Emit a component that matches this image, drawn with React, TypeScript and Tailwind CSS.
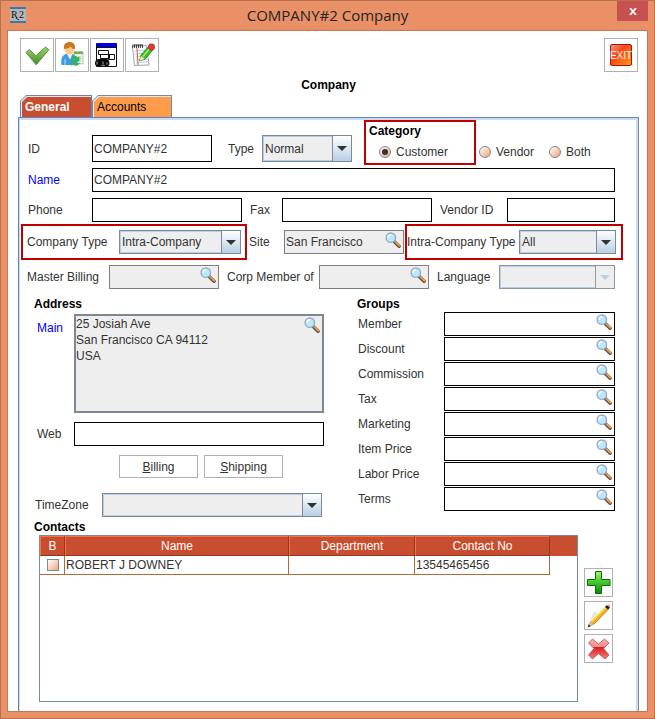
import { useState, type ReactNode } from "react";
import clsx from "clsx";

const GROUPS = ["Member", "Discount", "Commission", "Tax", "Marketing", "Item Price", "Labor Price", "Terms"];

const CATEGORIES = ["Customer", "Vendor", "Both"];

const CONTACTS = [{ name: "ROBERT J DOWNEY", department: "", phone: "13545465456" }];

function SearchIcon() {
  return (
    <svg viewBox="0 0 17 17" className="block size-4" aria-hidden="true">
      <path d="M10 10.400l5 4.800" stroke="#55504e" strokeWidth="3.600" strokeLinecap="round" />
      <path d="M11.400 10.900l4 3.600" stroke="#f09a3c" strokeWidth="2.200" strokeLinecap="round" />
      <path d="M9.200 9l1.800 1.800" stroke="#7c8ba0" strokeWidth="2" />
      <circle cx="6.200" cy="6" r="5" fill="#b9e8ff" stroke="#9aaac4" strokeWidth="1.500" />
      <path d="M3.200 6.200c0-2 1.400-3.200 3.200-3.300" stroke="#fff" strokeWidth="1.500" fill="none" />
    </svg>
  );
}

function TextField({ id, value = "", autoFocus, className }: { id: string; value?: string; autoFocus?: boolean; className?: string }) {
  return (
    <input
      id={id}
      defaultValue={value}
      autoFocus={autoFocus}
      className={clsx("min-w-0 border border-black bg-white pl-px text-[#333] outline-none", className)}
    />
  );
}

function LookupField({ id, label, value = "", locked, className }: { id: string; label: string; value?: string; locked?: boolean; className?: string }) {
  return (
    <div className={clsx("flex h-6 min-w-0 items-start border", locked ? "border-[#808080] bg-[#eee]" : "border-black bg-white", className)}>
      <input id={id} defaultValue={value} readOnly={locked} className="h-full min-w-0 flex-1 bg-transparent pl-px outline-none" />
      <button type="button" aria-label={`Find ${label}`} className="mt-px mr-0.5 shrink-0">
        <SearchIcon />
      </button>
    </div>
  );
}

function SelectField({ id, value = "", disabled, className }: { id: string; value?: string; disabled?: boolean; className?: string }) {
  return (
    <div className={clsx("relative border", disabled ? "border-[#8a98a5]" : "border-[#7a8a99]", className)}>
      <select
        id={id}
        disabled={disabled}
        defaultValue={value}
        className="block h-full w-full appearance-none border border-[#b8cfe5] bg-[#eee] pr-5 pl-px text-[#333] outline-none disabled:opacity-100"
      >
        <option>{value}</option>
      </select>
      <span
        className={clsx(
          "pointer-events-none absolute inset-y-0 right-0 flex w-[19px] items-center justify-center border-l",
          disabled ? "border-[#999] bg-[#eee]" : "border-[#7a8a99] bg-linear-to-b from-white to-[#b8cfe5]"
        )}
      >
        <svg viewBox="0 0 10 5" className="h-[5px] w-2.5">
          <path d="M0 0h10L5 5z" fill={disabled ? "#b8cfe5" : "#333"} />
        </svg>
      </span>
    </div>
  );
}

function ToolButton({ label, children }: { label: string; children: ReactNode }) {
  return (
    <button type="button" aria-label={label} className="size-[34px] border border-[#b0b0b0] bg-white">
      <svg viewBox="0 0 32 32" className="block size-8">{children}</svg>
    </button>
  );
}

function SideButton({ label, children }: { label: string; children: ReactNode }) {
  return (
    <button type="button" aria-label={label} className="size-[29px] border border-[#b0b0b0] bg-white">
      <svg viewBox="0 0 27 27" className="block size-[27px]">{children}</svg>
    </button>
  );
}

function Tab({ label, active }: { label: string; active?: boolean }) {
  return (
    <button
      type="button"
      role="tab"
      aria-selected={!!active}
      className={clsx(
        "h-[22px] px-px pt-px [clip-path:polygon(6px_0,100%_0,100%_100%,0_100%,0_6px)]",
        active ? "w-[72px] bg-[#6382bf]" : "w-20 bg-[#7a8a99]"
      )}
    >
      <span className="block h-full bg-[#dfeaf6] pt-px pl-px [clip-path:polygon(5px_0,100%_0,100%_100%,0_100%,0_5px)]">
        <span
          className={clsx(
            "flex h-full items-center pl-[3px] [clip-path:polygon(5px_0,100%_0,100%_100%,0_100%,0_5px)]",
            active ? "bg-[#c84e2f] font-bold text-white" : "bg-[#ff9c4c] text-black"
          )}
        >
          {label}
        </span>
      </span>
    </button>
  );
}

function Category({ name, checked, onPick }: { name: string; checked: boolean; onPick: () => void }) {
  return (
    <label className="flex h-[22px] items-center gap-[5px]">
      <input
        type="radio"
        name="category"
        checked={checked}
        onChange={onPick}
        className="grid size-3 appearance-none place-items-center rounded-full border border-[#7a8a99] bg-linear-to-br from-white to-[#f0a070] before:size-1.5 before:rounded-full checked:before:bg-[#333]"
      />
      {name}
    </label>
  );
}

function HeadCell({ children, className }: { children: ReactNode; className?: string }) {
  return (
    <th className={clsx("h-5 border border-t-[#ff7043] border-r-[#8c3720] border-b-[#8c3720] border-l-[#ff7043] p-0 font-normal", className)}>
      {children}
    </th>
  );
}

export default function App() {
  const [category, setCategory] = useState("Customer");

  return (
    <div className="flex min-h-screen flex-col border border-[#b8704f] bg-[#ea9066] px-1.5 pb-1.5 font-['Liberation_Sans',Arial,sans-serif] text-xs text-[#333]">
      <header className="grid h-[29px] grid-cols-[1fr_auto_1fr] items-start">
        <svg viewBox="0 0 16 16" className="mt-1.5 ml-[3px] size-4" aria-hidden="true">
          <path fill="#b3b5b8" d="M0 0h16v16H0z" />
          <path fill="#3c78a8" d="M0 0h16v2H0zM0 14h16v2H0z" />
          <text x="1" y="11" fontSize="10" fontFamily="Liberation Serif, serif" fill="#111">R</text>
          <text x="9" y="11" fontSize="10" fontFamily="Liberation Serif, serif" fill="#111">2</text>
          <path d="M6 11l3 2" stroke="#222" />
        </svg>
        <h1 className="pt-0.5 font-['Open_Sans',sans-serif] text-[15px] leading-6 text-[#222]">COMPANY#2 Company</h1>
        <button type="button" aria-label="Close" className="flex h-5 w-[31px] items-center justify-center justify-self-end bg-[#c75050]">
          <svg viewBox="0 0 8 7" className="h-[7px] w-2">
            <path d="M1 0l6 7M7 0L1 7" stroke="#fff" strokeWidth="1.800" />
          </svg>
        </button>
      </header>

      <main className="flex flex-1 flex-col border border-[#c27752] bg-white px-2.5 pt-[7px] pr-2">
        <div className="flex justify-between pr-px pl-0.5">
          <div className="flex gap-px">
            <ToolButton label="Save">
              <defs>
                <linearGradient id="tick" x1="0" y1="0" x2="0" y2="1">
                  <stop offset="0" stopColor="#a2d36c" />
                  <stop offset="1" stopColor="#3f8c28" />
                </linearGradient>
              </defs>
              <path d="M5 13.500l3.500-3 6.300 6.300L24.600 8l3.200 2.800L15.200 25.800z" fill="url(#tick)" stroke="#56913c" strokeWidth="1" strokeLinejoin="round" />
            </ToolButton>
            <ToolButton label="Update contact">
              <path d="M18 13h9v12l-9-1z" fill="#eef4e8" stroke="#b9c9b0" />
              <path d="M18 12.500h9v2.500h-9z" fill="#79ad52" />
              <path d="M20 17v6m2.500-6v6m2-6v6M18 19.500h9" stroke="#c8cfc4" strokeWidth=".7" />
              <path d="M5.500 26c-1-7 1-10.500 6-11.500h4c4 1.500 6 4 6.500 11.500z" fill="#3f9ae6" />
              <path d="M11 15l3 5.500 2.500-5.500z" fill="#fff" />
              <path d="M9 26v-6" stroke="#b9e0ff" />
              <ellipse cx="13.500" cy="10" rx="4.800" ry="5.500" fill="#f8c88c" />
              <path d="M8 10c-.8-5 2-7 5.500-7s6.500 2 5.200 7.500c-1.700-.3-3-1.500-4-3-1.200 1.800-4.500 2-6.700 2.500z" fill="#c9781c" />
              <path d="M14.500 20.500c1-3.500 5-4.500 7.500-2l1.500-1.500v5.500h-5.500l2-2c-1.500-1-3.500-1-5.500 0zM24 23.500c-1 3.500-5 4-7.500 2L15 27v-5h5l-1.800 2c1.500 1 3.500.8 5.800-.5z" fill="#35b548" />
            </ToolButton>
            <ToolButton label="Find window">
              <path d="M5.500 4.500h20v23h-20z" fill="#fff" stroke="#111" />
              <path d="M6 4h19.500v4.500H6z" fill="#0000e8" />
              <path d="M5 8.500h21" stroke="#111" />
              <path d="M7.500 11.500h10v4h-10zM9.500 15.500h9v4h-9zM17.500 15.500h6v5h-6z" fill="#fff" stroke="#111" />
              <path d="M4 24.500c0-3 1.500-4.500 4-4.500h7c2.500 0 3.500 2 3.500 4.500 0 2.700-3 3.200-5 2h-3c-1.500 2-6.500 1.500-6.500-2z" fill="#0a0a0a" />
              <path d="M6 22.500v3m6-3v3m4-2v2" stroke="#a8a8a8" />
            </ToolButton>
            <ToolButton label="Notes">
              <path d="M6.500 7.500l14-1 2.500 19.500-14.500.5z" fill="#fff" stroke="#9aa7ba" />
              <path d="M9 12l12-1M9 15l13-1M10 18l12-1M10 21l12-1M10 24l13-1.500" stroke="#9fc4ec" strokeWidth=".8" />
              <path d="M11 9l1 17" stroke="#ef5840" />
              <path d="M6.500 9V6.500l2-1V9m0-2.500l2-1V9m0-2.500l2-1V9m0-2.500l2-1V9m0-2.500l2-1V9" fill="none" stroke="#333" strokeWidth=".9" />
              <path d="M13.500 22l1.500-6 8-9 4.200 3.500-8.200 9.800z" fill="#41bd28" stroke="#27771c" strokeWidth=".8" />
              <path d="M17 17.500l7.500-9" stroke="#a8ed72" strokeWidth="1.400" />
              <path d="M13.500 22l1.500-5.300 3.800 3.300z" fill="#f7dca8" />
              <circle cx="25.500" cy="8" r="3.200" fill="#e33a31" stroke="#a72520" strokeWidth=".6" />
            </ToolButton>
          </div>
          <ToolButton label="Exit">
            <defs>
              <linearGradient id="exit" x1="0" y1="0" x2="1" y2="1">
                <stop offset="0" stopColor="#eaa08c" />
                <stop offset=".4" stopColor="#ff4510" />
                <stop offset="1" stopColor="#ff9c20" />
              </linearGradient>
            </defs>
            <rect x="5.500" y="5.500" width="21" height="21" rx="1.500" fill="url(#exit)" stroke="#a41510" />
            <text x="16" y="20" textAnchor="middle" fontSize="10" fontFamily="Liberation Sans, sans-serif" fill="#fff">EXIT</text>
          </ToolButton>
        </div>

        <h2 className="pt-1 text-center leading-[18px] font-bold text-black">Company</h2>

        <div role="tablist" className="flex pt-px pl-0.5">
          <Tab label="General" active />
          <Tab label="Accounts" />
        </div>

        <div className="flex flex-1 flex-col border-x border-t border-t-[#6382bf] border-r-[#7a8a99] border-l-[#6382bf]">
          <div className="flex flex-1 flex-col border-t-2 border-r-2 border-l border-[#c8ddf2] pr-[21px]">
            <div className="flex items-start pl-2">
              <div className="flex items-center pt-[15px]">
                <label htmlFor="company-id" className="w-16">ID</label>
                <TextField id="company-id" value="COMPANY#2" className="h-[27px] w-[120px]" />
                <label htmlFor="type" className="w-[50px] pl-4">Type</label>
                <SelectField id="type" value="Normal" className="h-[27px] w-[90px]" />
              </div>
              <div role="radiogroup" aria-label="Category" className="ml-3 flex items-end">
                <div className="h-[45px] w-28 border-2 border-[#c00000] pl-[3px]">
                  <h3 className="leading-[19px] font-bold text-black">Category</h3>
                  <div className="pl-2.5">
                    <Category name="Customer" checked={category === "Customer"} onPick={() => setCategory("Customer")} />
                  </div>
                </div>
                <div className="flex gap-[15px] pb-0.5 pl-[3px]">
                  {CATEGORIES.slice(1).map((name) => (
                    <Category key={name} name={name} checked={category === name} onPick={() => setCategory(name)} />
                  ))}
                </div>
              </div>
            </div>

            <div className="mt-[3px] flex items-center pl-2">
              <label htmlFor="name" className="w-16 text-[#0000ff]">Name</label>
              <TextField id="name" value="COMPANY#2" className="h-6 flex-1" />
            </div>

            <div className="mt-1.5 flex items-center pl-2">
              <label htmlFor="phone" className="w-16">Phone</label>
              <TextField id="phone" className="h-6 w-[150px]" />
              <label htmlFor="fax" className="w-10 pl-2">Fax</label>
              <TextField id="fax" autoFocus className="h-6 w-[150px]" />
              <label htmlFor="vendor-id" className="w-[75px] pl-2">Vendor ID</label>
              <TextField id="vendor-id" className="h-6 flex-1" />
            </div>

            <div className="mt-0.5 -mr-2 flex items-center pl-px">
              <div className="flex w-[226px] items-center border-2 border-[#c00000] py-1 pl-1">
                <label htmlFor="company-type" className="w-[92px]">Company Type</label>
                <SelectField id="company-type" value="Intra-Company" className="h-6 w-[122px]" />
              </div>
              <label htmlFor="site" className="w-[37px] pl-0.5">Site</label>
              <LookupField id="site" label="site" value="San Francisco" locked className="w-[120px]" />
              <div className="ml-px flex flex-1 items-center border-2 border-[#c00000] py-1 pr-[5px]">
                <label htmlFor="intra-type" className="w-28 whitespace-nowrap">Intra-Company Type</label>
                <SelectField id="intra-type" value="All" className="h-6 flex-1" />
              </div>
            </div>

            <div className="mt-[5px] flex items-center pl-[7px]">
              <label htmlFor="master" className="w-[82px]">Master Billing</label>
              <LookupField id="master" label="master billing" locked className="w-[110px]" />
              <label htmlFor="corp" className="w-[100px] pl-2 whitespace-nowrap">Corp Member of</label>
              <LookupField id="corp" label="corp member" locked className="w-[110px]" />
              <label htmlFor="language" className="w-[70px] pl-2">Language</label>
              <SelectField id="language" disabled className="h-6 flex-1" />
            </div>

            <div className="flex gap-[33px] pt-[7px] pl-3.5">
              <section className="flex-1">
                <h3 className="leading-4 font-bold text-black">Address</h3>
                <div className="mt-0.5 flex pl-[3px]">
                  <label htmlFor="address" className="w-[37px] pt-1.5 text-[#0000ff]">Main</label>
                  <div className="relative flex-1">
                    <textarea
                      id="address"
                      readOnly
                      defaultValue={"25 Josiah Ave\nSan Francisco CA 94112\nUSA"}
                      className="block h-[99px] w-full resize-none border-2 border-[#7f8890] bg-[#eee] leading-4 outline-none"
                    />
                    <button type="button" aria-label="Find address" className="absolute top-[3px] right-1">
                      <SearchIcon />
                    </button>
                  </div>
                </div>
                <div className="mt-[9px] flex items-center pl-[3px]">
                  <label htmlFor="web" className="w-[37px]">Web</label>
                  <TextField id="web" className="h-6 flex-1" />
                </div>
                <div className="mt-[9px] flex gap-1.5 pl-[85px]">
                  <button type="button" className="h-[23px] w-[79px] border border-[#b0b0b0] bg-white pt-px">
                    <u>B</u>illing
                  </button>
                  <button type="button" className="h-[23px] w-[79px] border border-[#b0b0b0] bg-white pt-px">
                    <u>S</u>hipping
                  </button>
                </div>
                <div className="mt-[15px] flex items-center pl-px">
                  <label htmlFor="timezone" className="w-[67px]">TimeZone</label>
                  <SelectField id="timezone" className="mr-0.5 h-6 flex-1" />
                </div>
              </section>

              <section className="w-[258px]">
                <h3 className="leading-4 font-bold text-black">Groups</h3>
                <div className="flex flex-col gap-px">
                  {GROUPS.map((group) => (
                    <div key={group} className="flex items-center pl-px">
                      <label htmlFor={group} className="w-[86px] shrink-0">{group}</label>
                      <LookupField id={group} label={group} className="flex-1" />
                    </div>
                  ))}
                </div>
              </section>
            </div>

            <h3 className="mt-0.5 pl-3.5 leading-4 font-bold text-black">Contacts</h3>
            <div className="flex flex-1 gap-1.5 pb-[9px] pl-[19px]">
              <div className="min-h-[167px] flex-1 border border-[#7a8a99]">
                <table className="w-full table-fixed border-separate border-spacing-0">
                  <thead>
                    <tr className="bg-[#c84e2f] text-white">
                      <HeadCell className="w-[25px]">B</HeadCell>
                      <HeadCell>Name</HeadCell>
                      <HeadCell className="w-[126px]">Department</HeadCell>
                      <HeadCell className="w-[135px]">Contact No</HeadCell>
                      <td className="w-[27px]" />
                    </tr>
                  </thead>
                  <tbody>
                    {CONTACTS.map((contact) => (
                      <tr key={contact.name} className="*:h-[19px] *:border-[#b5693a] *:p-0 *:pl-px">
                        <td className="border-r border-b">
                          <input
                            type="checkbox"
                            aria-label={`Select ${contact.name}`}
                            className="mx-auto block size-3 appearance-none border border-[#7a8a99] bg-linear-to-br from-white to-[#f0a878] checked:bg-[#333]"
                          />
                        </td>
                        <td className="border-r border-b">{contact.name}</td>
                        <td className="border-r border-b">{contact.department}</td>
                        <td className="border-r border-b">{contact.phone}</td>
                      </tr>
                    ))}
                  </tbody>
                </table>
              </div>
              <div className="flex flex-col gap-1 pt-[33px] pr-0.5">
                <SideButton label="Add contact">
                  <defs>
                    <linearGradient id="plus" x1="0" y1="0" x2="0" y2="1">
                      <stop offset="0" stopColor="#a9f06a" />
                      <stop offset=".5" stopColor="#43c52c" />
                      <stop offset="1" stopColor="#078b08" />
                    </linearGradient>
                  </defs>
                  <path d="M10.500 2.500h6v8h8.500v6h-8.500v8h-6v-8h-8v-6h8z" fill="url(#plus)" stroke="#0b6d0c" strokeLinejoin="round" />
                </SideButton>
                <SideButton label="Edit contact">
                  <path d="M4 20l5-10 4 1z" fill="#e4e4e4" />
                  <path d="M5.500 19.500L21 4l2.800 2.400L8.500 22.500z" fill="#f6b414" />
                  <path d="M6.500 19.500L21.500 4.500" stroke="#ffe16c" strokeWidth="1.200" />
                  <path d="M8.500 22.500L24 6.500" stroke="#b86c10" strokeWidth=".9" />
                  <path d="M5.500 19.500l3 3L3 25z" fill="#e9bd98" stroke="#8a6a50" strokeWidth=".4" />
                  <path d="M2.800 25.200l.9-3 2 2z" fill="#222" />
                  <path d="M20 5l2-2 3 2.500L23 7.500z" fill="#222" />
                  <path d="M22 3l2.500-.5.5 3z" fill="#f08a6a" />
                </SideButton>
                <SideButton label="Delete contact">
                  <defs>
                    <linearGradient id="cross" x1="0" y1="0" x2="0" y2="1">
                      <stop offset="0" stopColor="#f6b4b4" />
                      <stop offset=".38" stopColor="#ee8d8d" />
                      <stop offset=".42" stopColor="#dc1c1c" />
                      <stop offset="1" stopColor="#f48080" />
                    </linearGradient>
                  </defs>
                  <path d="M7.500 4l6 5 6-5L24 8l-5.500 5.500L24 20l-4 4-6.500-5.500L7.500 24 3.500 20 9 13.500 3.500 8z" fill="url(#cross)" stroke="#c04848" strokeWidth=".8" strokeLinejoin="round" />
                </SideButton>
              </div>
            </div>
          </div>
        </div>
      </main>
    </div>
  );
}
